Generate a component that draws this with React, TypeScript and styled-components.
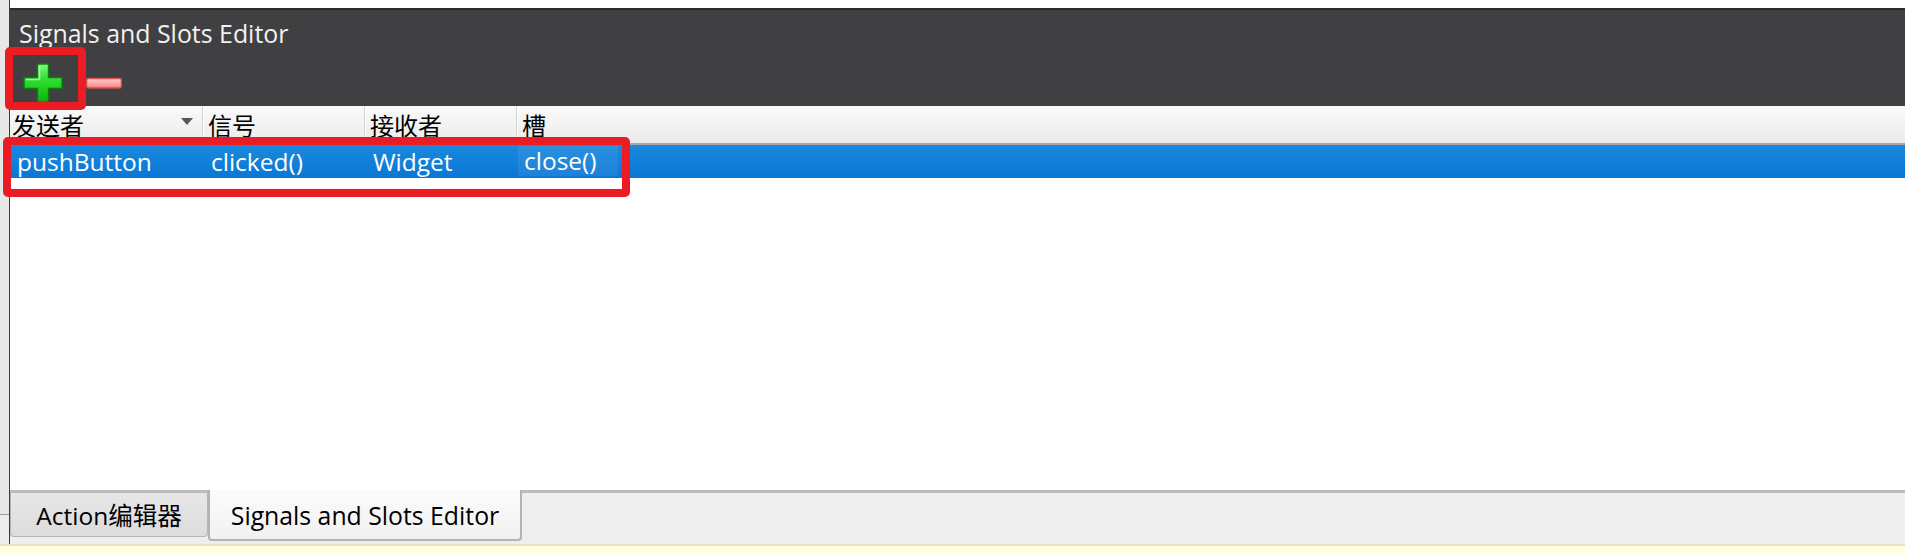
import React from "react";
import styled, { createGlobalStyle } from "styled-components";

const GlobalStyle = createGlobalStyle`
  html, body { margin: 0; padding: 0; background: #ffffff; }
  body { font-family: "Open Sans", "Noto Sans CJK SC", sans-serif; }
  #root { width: 1905px; height: 553px; }
`;

const Frame = styled.div`
  position: relative;
  width: 1905px;
  height: 553px;
  display: flex;
  flex-direction: column;
  overflow: hidden;
  font-family: "Open Sans", "Noto Sans CJK SC", sans-serif;
`;

const Body = styled.div`
  display: flex;
  flex: 1;
  min-height: 0;
`;

const SideStrip = styled.div`
  width: 9px;
  flex: none;
  border-right: 1px solid #3c3c3c;
  background: linear-gradient(
    to bottom,
    #e8e8e8 0,
    #e8e8e8 514px,
    #9c9c9c 514px,
    #9c9c9c 515px,
    #ececec 515px
  );
`;

const Main = styled.div`
  flex: 1;
  display: flex;
  flex-direction: column;
  min-width: 0;
`;

const TopGap = styled.div`
  height: 8px;
  background: #ffffff;
  flex: none;
`;

const Dock = styled.div`
  flex: none;
  box-sizing: border-box;
  height: 98px;
  background: #404042;
  border-top: 2px solid #2b2b2c;
  padding: 6px 0 0 9px;
  display: flex;
  flex-direction: column;
`;

const Title = styled.div`
  font-size: 24.9px;
  line-height: 34px;
  color: #f1f1f1;
  white-space: nowrap;
`;

const Toolbar = styled.div`
  display: flex;
  align-items: flex-start;
  gap: 23px;
  margin-top: 13px;
  padding-left: 4px;
`;

const ToolIcon = styled.svg`
  display: block;
  flex: none;
`;

const Table = styled.div`
  flex: 1;
  display: flex;
  flex-direction: column;
  background: #ffffff;
  min-height: 0;
`;

const HeaderRow = styled.div`
  flex: none;
  display: grid;
  grid-template-columns: 192px 162px 152px 1fr;
  box-sizing: border-box;
  height: 39px;
  border-bottom: 2px solid #a9a9a9;
  background: linear-gradient(to bottom, #fafafa, #ebebeb);
`;

const HeaderCell = styled.div<{ $first?: boolean }>`
  display: flex;
  align-items: center;
  justify-content: space-between;
  padding-left: ${(p) => (p.$first ? "2px" : "5px")};
  padding-right: 9px;
  border-left: ${(p) => (p.$first ? "none" : "1px solid #d3d3d3")};
  box-shadow: ${(p) => (p.$first ? "none" : "inset 1px 0 0 #ffffff")};
  font-family: "Noto Sans CJK SC", "Open Sans", sans-serif;
  font-size: 24px;
  line-height: 37px;
  color: #000000;
  white-space: nowrap;
`;

const SortArrow = styled.span`
  width: 0;
  height: 0;
  border-left: 6.5px solid transparent;
  border-right: 6.5px solid transparent;
  border-top: 7px solid #575757;
  align-self: flex-start;
  margin-top: 12px;
`;

const DataRow = styled.div`
  flex: none;
  display: grid;
  grid-template-columns: 192px 162px 152px 1fr;
  height: 33px;
  background: linear-gradient(to bottom, #1c88de, #0977d5);
  color: #ffffff;
  font-size: 24.5px;
  line-height: 33px;
`;

const DataCell = styled.div<{ $pad: number }>`
  padding-left: ${(p) => p.$pad}px;
  white-space: nowrap;
`;

const FocusBox = styled.span`
  display: inline-block;
  box-sizing: border-box;
  width: 100px;
  height: 30px;
  margin-top: 1px;
  padding-left: 6px;
  line-height: 30px;
  vertical-align: top;
  background: rgba(255, 255, 255, 0.07);
`;

const EmptyArea = styled.div`
  flex: 1;
`;

const TabBar = styled.div`
  flex: none;
  box-sizing: border-box;
  height: 54px;
  border-top: 3px solid #bcbcbc;
  background: #eeeeee;
  display: flex;
  align-items: flex-start;
`;

const Tab = styled.div<{ $active?: boolean; $width: number }>`
  box-sizing: border-box;
  width: ${(p) => p.$width}px;
  height: ${(p) => (p.$active ? "51px" : "44px")};
  margin-top: ${(p) => (p.$active ? "-3px" : "0")};
  border: ${(p) => (p.$active ? "2px solid #b3b3b3" : "1px solid #b5b5b5")};
  border-top: none;
  border-radius: 0 0 4px 4px;
  background: ${(p) =>
    p.$active
      ? "linear-gradient(to bottom, #fbfbfb, #f1f1f1)"
      : "linear-gradient(to bottom, #e7e7e7, #dcdcdc)"};
  display: flex;
  align-items: center;
  justify-content: center;
  font-size: ${(p) => (p.$active ? "24.8px" : "24.5px")};
  color: #000000;
  white-space: nowrap;
`;

const Footer = styled.div`
  flex: none;
  box-sizing: border-box;
  height: 9px;
  border-top: 2px solid #e4e2cb;
  background: #fffedd;
`;

const Callout = styled.div<{ $left: number; $top: number; $w: number; $h: number }>`
  position: absolute;
  left: ${(p) => p.$left}px;
  top: ${(p) => p.$top}px;
  width: ${(p) => p.$w}px;
  height: ${(p) => p.$h}px;
  box-sizing: border-box;
  border: 8px solid #ec1c24;
  border-radius: 5px;
  pointer-events: none;
`;

const PlusIcon = () => (
  <ToolIcon width="40" height="40" viewBox="0 0 40 40">
    <defs>
      <linearGradient id="plusFill" x1="0" y1="0" x2="0" y2="1">
        <stop offset="0" stopColor="#7cf87c" />
        <stop offset="0.4" stopColor="#2fe02f" />
        <stop offset="1" stopColor="#0db00d" />
      </linearGradient>
    </defs>
    <path
      d="M14.5 1h11v13.5h13.5v11h-13.5v13.5h-11v-13.5h-13.5v-11h13.5z"
      fill="url(#plusFill)"
      stroke="#0b7e0b"
      strokeWidth="1.4"
      strokeLinejoin="round"
    />
    <path d="M16.5 3v13.5M3 16.5h13.5" stroke="#b4ffb4" strokeWidth="1.6" fill="none" opacity="0.8" />
  </ToolIcon>
);

const MinusIcon = () => (
  <ToolIcon width="36" height="40" viewBox="0 0 36 40">
    <defs>
      <linearGradient id="minusFill" x1="0" y1="0" x2="0" y2="1">
        <stop offset="0" stopColor="#ffd0d0" />
        <stop offset="0.5" stopColor="#ffa9a9" />
        <stop offset="1" stopColor="#ee8080" />
      </linearGradient>
    </defs>
    <rect x="0.7" y="15.5" width="34.6" height="9.5" rx="1.5" fill="url(#minusFill)" stroke="#d5504f" strokeWidth="1.3" />
  </ToolIcon>
);

export default function App() {
  return (
    <Frame>
      <GlobalStyle />
      <Body>
        <SideStrip />
        <Main>
          <TopGap />
          <Dock>
            <Title>Signals and Slots Editor</Title>
            <Toolbar>
              <PlusIcon />
              <MinusIcon />
            </Toolbar>
          </Dock>
          <Table>
            <HeaderRow>
              <HeaderCell $first>
                <span>发送者</span>
                <SortArrow />
              </HeaderCell>
              <HeaderCell>信号</HeaderCell>
              <HeaderCell>接收者</HeaderCell>
              <HeaderCell>槽</HeaderCell>
            </HeaderRow>
            <DataRow>
              <DataCell $pad={7}>pushButton</DataCell>
              <DataCell $pad={9}>clicked()</DataCell>
              <DataCell $pad={9}>Widget</DataCell>
              <DataCell $pad={2}>
                <FocusBox>close()</FocusBox>
              </DataCell>
            </DataRow>
            <EmptyArea />
          </Table>
          <TabBar>
            <Tab $width={198}>Action编辑器</Tab>
            <Tab $active $width={314}>Signals and Slots Editor</Tab>
          </TabBar>
        </Main>
      </Body>
      <Footer />
      <Callout $left={5} $top={47} $w={81} $h={63} />
      <Callout $left={3} $top={137} $w={627} $h={60} />
    </Frame>
  );
}
